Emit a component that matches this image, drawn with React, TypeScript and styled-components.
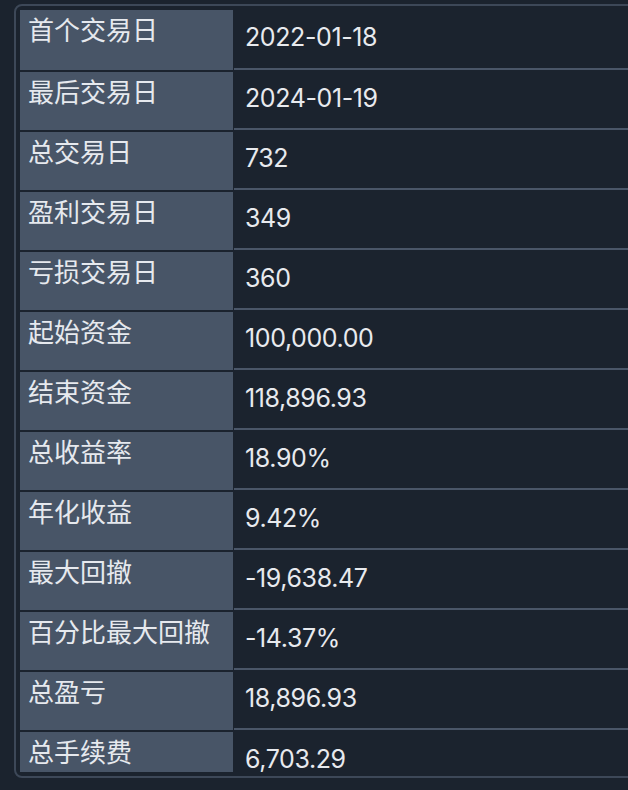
import React from "react";
import styled, { createGlobalStyle } from "styled-components";

const GlobalStyle = createGlobalStyle`
  html, body {
    margin: 0;
    padding: 0;
    background: #1b232e;
    overflow: hidden;
  }
  body {
    font-family: "Inter", "Noto Sans CJK SC", sans-serif;
  }
`;

const Page = styled.div`
  padding: 4px 0 0 14px;
  height: 790px;
  box-sizing: border-box;
`;

const Panel = styled.section`
  width: 720px;
  height: 774px;
  box-sizing: border-box;
  border: 2px solid #3d4858;
  border-radius: 8px;
  padding: 4px 0 4px 4px;
`;

const Scroller = styled.div`
  height: 100%;
  overflow: hidden;
`;

const Table = styled.div`
  display: flex;
  flex-direction: column;
  gap: 2px;
`;

const Row = styled.div<{ $first?: boolean }>`
  display: grid;
  grid-template-columns: 213px 1fr;
  column-gap: 1px;
  height: ${(p) => (p.$first ? 60 : 58)}px;
`;

const Label = styled.div`
  background: #485567;
  color: #e6e9ee;
  font-family: "Noto Sans CJK SC", "Inter", sans-serif;
  font-size: 26px;
  line-height: 38px;
  padding: 0 8px;
  box-sizing: border-box;
  white-space: nowrap;
`;

const Value = styled.div<{ $last?: boolean }>`
  background: #1b232e;
  color: #e8eaee;
  font-family: "Inter", "Noto Sans CJK SC", sans-serif;
  font-size: 25px;
  line-height: 25px;
  letter-spacing: -0.4px;
  display: flex;
  align-items: center;
  padding: 0 11px 4px 11px;
  box-sizing: border-box;
  border-bottom: ${(p) => (p.$last ? "none" : "2px solid #4a5668")};
`;

const rows: [string, string][] = [
  ["首个交易日", "2022-01-18"],
  ["最后交易日", "2024-01-19"],
  ["总交易日", "732"],
  ["盈利交易日", "349"],
  ["亏损交易日", "360"],
  ["起始资金", "100,000.00"],
  ["结束资金", "118,896.93"],
  ["总收益率", "18.90%"],
  ["年化收益", "9.42%"],
  ["最大回撤", "-19,638.47"],
  ["百分比最大回撤", "-14.37%"],
  ["总盈亏", "18,896.93"],
  ["总手续费", "6,703.29"],
];

export default function App() {
  return (
    <>
      <GlobalStyle />
      <Page>
        <Panel>
          <Scroller>
            <Table>
              {rows.map(([k, v], i) => (
                <Row key={k} $first={i === 0}>
                  <Label>{k}</Label>
                  <Value $last={i === rows.length - 1}>{v}</Value>
                </Row>
              ))}
            </Table>
          </Scroller>
        </Panel>
      </Page>
    </>
  );
}
